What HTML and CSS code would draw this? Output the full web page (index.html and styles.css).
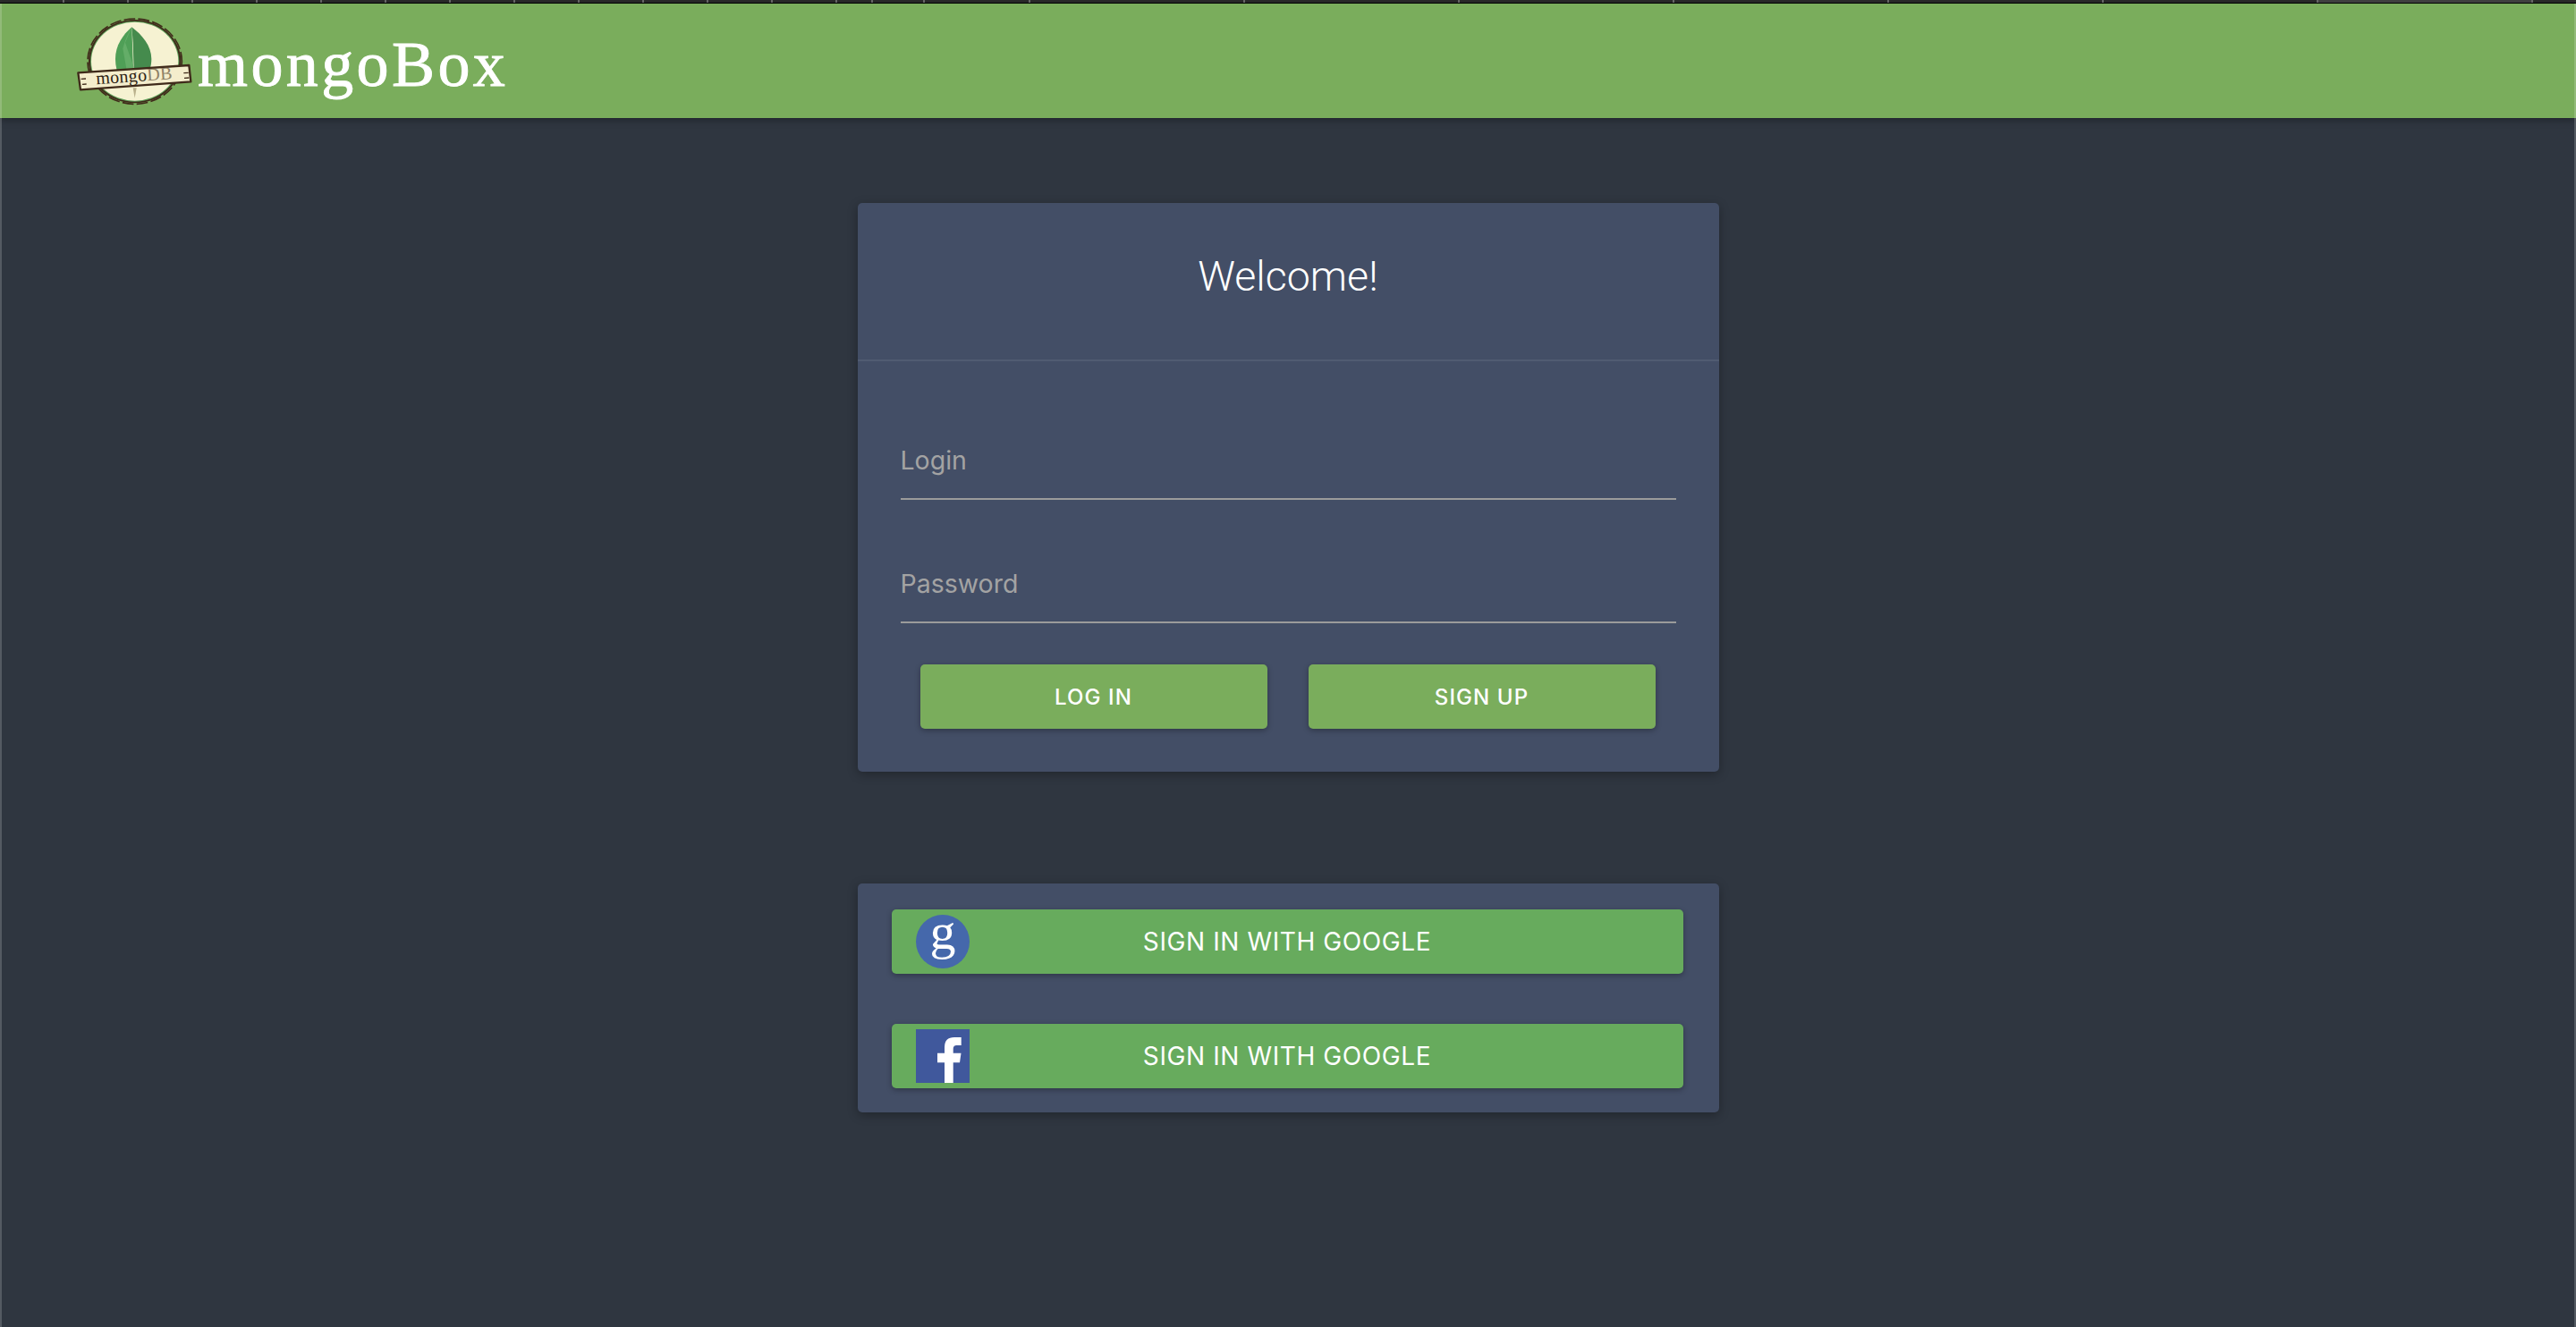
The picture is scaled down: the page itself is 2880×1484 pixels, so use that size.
FILE: index.html
```html
<!DOCTYPE html>
<html lang="en">
<head>
  <meta charset="UTF-8">
  <title>mongoBox</title>
  <link rel="stylesheet" href="styles.css">
</head>
<body>
  <div class="tabStrip">
    <div class="tab tabFirst"></div>
    <div class="tab tabPinned"></div>
    <div class="tab tabPinned"></div>
    <div class="tab tabPinned"></div>
    <div class="tab tabPinned"></div>
    <div class="tab tabPinned"></div>
    <div class="tab tabPinned"></div>
    <div class="tab tabPinned"></div>
    <div class="tab tabPinned"></div>
    <div class="tab tabPinned"></div>
    <div class="tab tabPinned"></div>
    <div class="tab tabPinned"></div>
    <div class="tab tabPinned"></div>
    <div class="tab tabTiny"></div>
    <div class="tab tabSmall"></div>
    <div class="tab tabMid"></div>
    <div class="tab tabWide"></div>
    <div class="tab tabWide"></div>
    <div class="tab tabWide"></div>
    <div class="tab tabWide"></div>
    <div class="tab tabWide"></div>
    <div class="tab tabWide"></div>
    <div class="tab tabWide tabActive"></div>
  </div>

  <header class="topBar">
    <svg class="logo" viewBox="0 0 480 345" aria-hidden="true">
      <ellipse cx="272" cy="173" rx="155" ry="140" fill="#3f2a1a"/>
      <ellipse cx="272" cy="173" rx="158" ry="143" fill="none" stroke="#3f2a1a" stroke-width="5" stroke-dasharray="38 10"/>
      <ellipse cx="272" cy="173" rx="149" ry="135" fill="#5d9f58"/>
      <ellipse cx="272" cy="173" rx="146" ry="132" fill="#f6f2d2"/>
      <path d="M262 58C232 84 207 120 207 165C207 190 213 210 222 232H268Z" fill="#4f9f57"/>
      <path d="M262 58L240 110L268 190L270 232H268L250 232L232 130C240 100 250 78 262 58Z" fill="#64ad68"/>
      <path d="M262 58C296 84 328 120 328 165C328 190 320 210 310 232H270L266 110Z" fill="#458b4d"/>
      <path d="M266 262L272 296L278 262Z" fill="#b9b08c"/>
      <path d="M82 211L454 186L460 241L90 268Z" fill="#f4edcc" stroke="#3f2a1a" stroke-width="7" stroke-linejoin="round"/>
      <path d="M92 232L108 231M96 250L110 249M436 212L452 211M438 229L454 228" stroke="#3f2a1a" stroke-width="4"/>
      <text class="logoWord" x="143" y="250" transform="rotate(-4 143 250)">mongo<tspan class="logoDb">DB</tspan></text>
    </svg>
    <span class="brandName">mongoBox</span>
  </header>

  <main class="content">
    <section class="card loginCard">
      <h1 class="cardTitle">Welcome!</h1>
      <form class="loginForm">
        <input class="textField" type="text" placeholder="Login">
        <input class="textField" type="password" placeholder="Password">
        <div class="buttonRow">
          <button class="btn" type="button">Log in</button>
          <button class="btn" type="button">Sign up</button>
        </div>
      </form>
    </section>

    <section class="card socialCard">
      <button class="btn socialBtn" type="button">
        <svg class="socialIcon" viewBox="0 0 60 60" aria-hidden="true">
          <circle cx="30" cy="30" r="30" fill="#4568ab"/>
          <text class="googleG" x="30" y="38">g</text>
        </svg>
        Sign in with Google
      </button>
      <button class="btn socialBtn" type="button">
        <svg class="socialIcon" viewBox="0 0 60 60" aria-hidden="true">
          <rect width="60" height="60" fill="#40589c"/>
          <path d="M32 60V37.3H24V26.7H32V20Q32 9 43 9H50.7V18H45.5Q41.7 18 41.7 22V26.7H50.5L49 37.3H41.7V60Z" fill="#fff"/>
        </svg>
        Sign in with Google
      </button>
    </section>
  </main>
</body>
</html>
```

FILE: styles.css
```css
html, body {
  margin: 0;
  padding: 0;
  height: 100%;
  overflow: hidden;
}

body {
  background-color: #2f3640;
  font-family: Inter, Roboto, sans-serif;
}

/* thin light edges of the window */
body::before, body::after {
  content: "";
  position: fixed;
  top: 4px;
  bottom: 0;
  width: 2px;
  background-color: rgba(255, 255, 255, 0.18);
  z-index: 5;
}
body::before { left: 0; }
body::after { right: 0; }

.tabStrip {
  display: flex;
  height: 3px;
  background-color: #2b2b2b;
  border-bottom: 1px solid #000;
}

.tab {
  box-sizing: border-box;
  flex: none;
  border-right: 2px solid #666;
}
.tabFirst { width: 72px; }
.tabPinned { width: 72px; }
.tabTiny { width: 40px; }
.tabSmall { width: 58px; }
.tabMid { width: 118px; }
.tabWide { width: 240px; }
.tabActive { background-color: #404040; }

.topBar {
  display: flex;
  align-items: center;
  height: 128px;
  padding-left: 60px;
  background-color: #7aad5c;
  box-shadow: 0 2px 8px rgba(0, 0, 0, 0.35);
}

.logo {
  flex: none;
  width: 160px;
  height: 115px;
}

.logoWord {
  font-family: "Liberation Serif", serif;
  font-size: 60px;
  fill: #2e1f14;
  letter-spacing: 1px;
}
.logoDb { fill: #8f8166; }

.brandName {
  margin: 8px 0 0 1px;
  font-family: "Liberation Serif", serif;
  font-size: 72px;
  letter-spacing: 3.4px;
  color: #fff;
  -webkit-text-stroke: 0.9px #fff;
}

.content {
  width: 963px;
  margin: 95px auto 0;
}

.card {
  box-sizing: border-box;
  background-color: #434e66;
  border-radius: 5px;
  box-shadow: 0 3px 12px rgba(0, 0, 0, 0.3);
}

.loginCard { height: 636px; }

.cardTitle {
  box-sizing: border-box;
  height: 177px;
  margin: 0;
  padding-top: 56px;
  border-bottom: 2px solid #505b72;
  font-family: Roboto, "Liberation Sans", sans-serif;
  font-size: 46.5px;
  font-weight: 300;
  line-height: 52px;
  text-align: center;
  color: #fff;
}

.loginForm {
  display: flex;
  flex-direction: column;
  padding: 83px 48px 0;
}

.textField {
  box-sizing: border-box;
  height: 72px;
  margin-bottom: 66px;
  padding: 0 0 15px;
  border: none;
  border-bottom: 2px solid #9b9b9b;
  border-radius: 0;
  outline: none;
  background: none;
  font-family: inherit;
  font-size: 28.5px;
  color: #fff;
}
.textField::placeholder { color: #a3a3a3; opacity: 1; }
.textField:last-of-type { margin-bottom: 46px; }

.buttonRow {
  display: flex;
  gap: 46px;
  padding: 0 23px 0 22px;
}

.btn {
  flex: 1;
  height: 72px;
  padding: 0;
  border: none;
  border-radius: 5px;
  background-color: #7aad5c;
  box-shadow: 0 2px 6px rgba(0, 0, 0, 0.3);
  font-family: inherit;
  font-size: 24px;
  font-weight: 500;
  letter-spacing: 1.1px;
  text-transform: uppercase;
  color: #fff;
  cursor: pointer;
}

.socialCard {
  display: flex;
  flex-direction: column;
  gap: 56px;
  height: 256px;
  margin-top: 125px;
  padding: 29px 40px 27px 38px;
}

.socialBtn {
  position: relative;
  flex: none;
  background-color: #67ab5d;
  font-size: 28px;
  font-weight: 400;
  letter-spacing: 0.6px;
}

.socialIcon {
  position: absolute;
  left: 27px;
  top: 6px;
  width: 60px;
  height: 60px;
  overflow: visible;
}

.googleG {
  font-family: "Liberation Serif", serif;
  font-size: 58px;
  font-weight: 400;
  text-anchor: middle;
  text-transform: none;
  letter-spacing: 0;
  fill: #fff;
}
```
